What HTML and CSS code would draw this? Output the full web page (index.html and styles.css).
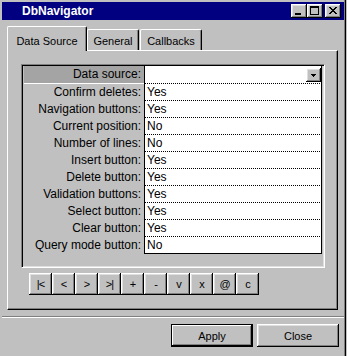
FILE: index.html
```html
<!DOCTYPE html>
<html>
<head>
<meta charset="utf-8">
<link rel="stylesheet" href="styles.css">
</head>
<body>
<div class="window">
  <div class="titlebar">
    <span class="title">DbNavigator</span>
    <div class="tbtns">
      <span class="tbtn"><svg width="16" height="14" viewBox="0 0 16 14" shape-rendering="crispEdges"><path d="M4 9h6v2h-6z" fill="#000"/></svg></span>
      <span class="tbtn"><svg width="16" height="14" viewBox="0 0 16 14" shape-rendering="crispEdges"><path d="M3 2h9v2h-9z M3 4h1v7h-1z M11 4h1v7h-1z M3 10h9v1h-9z" fill="#000"/></svg></span>
      <span class="tbtn close"><svg width="16" height="14" viewBox="0 0 16 14" shape-rendering="crispEdges"><path d="M4 3h2v1h-2z M10 3h2v1h-2z M5 4h2v1h-2z M9 4h2v1h-2z M6 5h4v1h-4z M7 6h2v1h-2z M6 7h4v1h-4z M5 8h2v1h-2z M9 8h2v1h-2z M4 9h2v1h-2z M10 9h2v1h-2z" fill="#000"/></svg></span>
    </div>
  </div>

  <div class="tabs">
    <div class="tab active">Data Source</div>
    <div class="tab tab-general">General</div>
    <div class="tab tab-callbacks">Callbacks</div>
  </div>

  <div class="panel">
    <div class="grid">
      <div class="row first">
        <div class="label sel">Data source:</div>
        <div class="value combo-cell"><span class="combo"><svg width="5" height="3" viewBox="0 0 5 3" shape-rendering="crispEdges"><path d="M0 0h5v1h-5z M1 1h3v1h-3z M2 2h1v1h-1z" fill="#000"/></svg></span></div>
      </div>
      <div class="row"><div class="label">Confirm deletes:</div><div class="value">Yes</div></div>
      <div class="row"><div class="label">Navigation buttons:</div><div class="value">Yes</div></div>
      <div class="row"><div class="label">Current position:</div><div class="value">No</div></div>
      <div class="row"><div class="label">Number of lines:</div><div class="value">No</div></div>
      <div class="row"><div class="label">Insert button:</div><div class="value">Yes</div></div>
      <div class="row"><div class="label">Delete button:</div><div class="value">Yes</div></div>
      <div class="row"><div class="label">Validation buttons:</div><div class="value">Yes</div></div>
      <div class="row"><div class="label">Select button:</div><div class="value">Yes</div></div>
      <div class="row"><div class="label">Clear button:</div><div class="value">Yes</div></div>
      <div class="row last"><div class="label">Query mode button:</div><div class="value">No</div></div>
    </div>
    <div class="nav">
      <button class="nbtn">|&lt;</button>
      <button class="nbtn">&lt;</button>
      <button class="nbtn">&gt;</button>
      <button class="nbtn">&gt;|</button>
      <button class="nbtn">+</button>
      <button class="nbtn">-</button>
      <button class="nbtn">v</button>
      <button class="nbtn">x</button>
      <button class="nbtn">@</button>
      <button class="nbtn">c</button>
    </div>
  </div>

  <div class="sep"></div>

  <div class="actions">
    <button class="btn default">Apply</button>
    <button class="btn">Close</button>
  </div>
</div>
</body>
</html>
```

FILE: styles.css
```css
html, body {
  margin: 0;
  padding: 0;
  background: #c0c0c0;
}
body {
  width: 347px;
  height: 356px;
  overflow: hidden;
  font-family: "Liberation Sans", Arial, sans-serif;
  color: #000;
}
.window {
  box-sizing: border-box;
  width: 346px;
  height: 356px;
  padding: 2px 1px 0 2px;
  border-right: 1px solid #000;
  box-shadow: inset -1px 0 #808080;
}
.titlebar {
  height: 18px;
  background: #000080;
  display: flex;
  align-items: center;
  padding: 0 3px 0 20px;
}
.title {
  flex: 1;
  color: #fff;
  font-weight: bold;
  font-size: 12px;
  line-height: 18px;
}
.tbtns {
  display: flex;
}
.tbtn {
  display: block;
  width: 16px;
  height: 14px;
  background: #c0c0c0;
  box-shadow: inset -1px -1px #000, inset 1px 1px #fff, inset -2px -2px #808080, inset 2px 2px #dfdfdf;
}
.tbtn svg {
  display: block;
}
.tbtn.close {
  margin-left: 2px;
}
.tabs {
  display: flex;
  align-items: flex-end;
  height: 24px;
  margin: 6px 0 0 5px;
}
.tab {
  box-sizing: border-box;
  display: flex;
  align-items: center;
  justify-content: center;
  font-size: 11px;
  height: 21px;
  padding-top: 1px;
  border-top: 1px solid #fff;
  border-left: 1px solid #fff;
  border-right: 1px solid #000;
  box-shadow: inset -1px 0 #808080;
  border-radius: 2px 2px 0 0;
  background: #c0c0c0;
}
.tab.active {
  position: relative;
  z-index: 1;
  width: 80px;
  height: 25px;
  margin-bottom: -1px;
  padding-top: 3px;
}
.tab-general {
  width: 52px;
}
.tab-callbacks {
  width: 62px;
  margin-left: 1px;
}
.panel {
  box-sizing: border-box;
  width: 331px;
  height: 260px;
  margin-left: 5px;
  border: 1px solid;
  border-color: #fff #000 #000 #fff;
  box-shadow: inset -1px -1px #808080;
  padding: 13px 0 0 13px;
}
.grid {
  box-sizing: border-box;
  width: 304px;
  height: 204px;
  border: 1px solid;
  border-color: #808080 #fff #fff #808080;
  box-shadow: inset 1px 1px #000, inset -1px -1px #dfdfdf;
  padding: 1px 0 0 1px;
}
.row {
  display: flex;
  font-size: 12px;
}
.label {
  box-sizing: border-box;
  width: 120px;
  margin-left: 1px;
  height: 17px;
  line-height: 16px;
  text-align: right;
  padding-right: 3px;
  border-bottom: 1px solid transparent;
  white-space: nowrap;
}
.label.sel {
  background: #a4a4a4;
  border-bottom-color: #fff;
  height: 18px;
  line-height: 17px;
}
.value {
  box-sizing: border-box;
  width: 178px;
  height: 17px;
  line-height: 16px;
  background: #fff;
  border-left: 1px solid #000;
  border-right: 1px solid #000;
  border-bottom: 1px dotted #000;
  padding-left: 2px;
}
.row.first .value {
  height: 18px;
}
.row.last .value {
  border-bottom: 1px solid #000;
}
.combo-cell {
  display: flex;
  justify-content: flex-end;
  align-items: flex-start;
  padding-top: 2px;
}
.combo {
  box-sizing: border-box;
  width: 15px;
  height: 14px;
  background: #c0c0c0;
  box-shadow: inset -1px -1px #000, inset 1px 1px #fff, inset -2px -2px #808080, inset 2px 2px #dfdfdf;
  display: flex;
  align-items: center;
  justify-content: center;
  padding-top: 1px;
}
.combo svg {
  display: block;
}
.nav {
  display: flex;
  margin: 5px 0 0 8px;
}
.nbtn {
  box-sizing: border-box;
  width: 23px;
  height: 22px;
  padding: 0;
  margin: 0;
  border: none;
  background: #c0c0c0;
  box-shadow: inset -1px -1px #000, inset 1px 1px #fff, inset -2px -2px #808080, inset 2px 2px #dfdfdf;
  font-family: "Liberation Sans", Arial, sans-serif;
  font-size: 11px;
  color: #000;
  letter-spacing: -1px;
  line-height: 22px;
}
.sep {
  height: 0;
  margin-top: 6px;
  border-top: 1px solid #808080;
  border-bottom: 1px solid #fff;
}
.actions {
  display: flex;
  justify-content: flex-end;
  gap: 4px;
  margin-top: 6px;
  padding-right: 5px;
}
.btn {
  box-sizing: border-box;
  width: 82px;
  height: 23px;
  padding: 0;
  margin: 0;
  border: none;
  background: #c0c0c0;
  box-shadow: inset -1px -1px #000, inset 1px 1px #fff, inset -2px -2px #808080, inset 2px 2px #dfdfdf;
  font-family: "Liberation Sans", Arial, sans-serif;
  font-size: 11px;
  color: #000;
}
.btn.default {
  border: 1px solid #000;
  box-shadow: inset -1px -1px #000, inset 1px 1px #fff, inset -2px -2px #808080;
}
```
